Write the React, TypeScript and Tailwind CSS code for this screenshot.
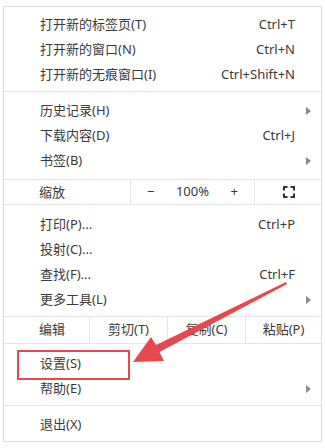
import React from "react";

const FONT = {
  fontFamily: '"Noto Sans", "Noto Sans CJK SC", sans-serif',
};

type Item = { label: string; shortcut?: string; submenu?: boolean };

function MenuRow({ label, shortcut, submenu }: Item) {
  return (
    <div className="flex items-center h-[25px] pl-[36px] pr-[26px] relative">
      <span className="flex-1">{label}</span>
      {shortcut && <span>{shortcut}</span>}
      {submenu && (
        <span className="absolute right-[10px] top-[9px] w-0 h-0 border-y-[4px] border-y-transparent border-l-[5px] border-l-[#8a8a8a]" />
      )}
    </div>
  );
}

function FullscreenIcon() {
  return (
    <svg width="12" height="12" viewBox="0 0 12 12" fill="none" stroke="#333" strokeWidth="2">
      <path d="M1 4.5V1h3.5M7.5 1H11v3.5M11 7.5V11H7.5M4.5 11H1V7.5" />
    </svg>
  );
}

export default function App() {
  return (
    <div className="w-[325px] h-[448px] bg-white relative text-[13px] text-[#3a3a3a]" style={FONT}>
      <div className="absolute left-[3px] top-[6px] w-[319px] h-[436px] border border-[#dcdcdc]">
        {/* new tabs / windows */}
        <div className="pt-[5px] pb-[4px] border-b border-[#e5e5e5]">
          <MenuRow label="打开新的标签页(T)" shortcut="Ctrl+T" />
          <MenuRow label="打开新的窗口(N)" shortcut="Ctrl+N" />
          <MenuRow label="打开新的无痕窗口(I)" shortcut="Ctrl+Shift+N" />
        </div>

        {/* history, downloads, bookmarks */}
        <div className="pt-[6px] pb-[6px] border-b border-[#e5e5e5]">
          <MenuRow label="历史记录(H)" submenu />
          <MenuRow label="下载内容(D)" shortcut="Ctrl+J" />
          <MenuRow label="书签(B)" submenu />
        </div>

        {/* zoom */}
        <div className="flex h-[25px] border-b border-[#e5e5e5]">
          <div className="w-[127px] pl-[35px] pt-[2px] flex items-center border-r border-[#e5e5e5]">缩放</div>
          <div className="w-[124px] flex items-center justify-between px-[16px] border-r border-[#e5e5e5]">
            <span>−</span>
            <span>100%</span>
            <span>+</span>
          </div>
          <div className="flex-1 flex items-center justify-center pl-[2px]">
            <FullscreenIcon />
          </div>
        </div>

        {/* print, cast, find, tools */}
        <div className="pt-[7px] pb-[4px] border-b border-[#e5e5e5]">
          <MenuRow label="打印(P)..." shortcut="Ctrl+P" />
          <MenuRow label="投射(C)..." />
          <MenuRow label="查找(F)..." shortcut="Ctrl+F" />
          <MenuRow label="更多工具(L)" submenu />
        </div>

        {/* edit */}
        <div className="flex h-[27px] border-b border-[#e5e5e5]">
          <div className="w-[86px] pl-[35px] flex items-center border-r border-[#e5e5e5]">编辑</div>
          <div className="w-[78px] flex items-center justify-center border-r border-[#e5e5e5]">剪切(T)</div>
          <div className="w-[78px] flex items-center justify-center border-r border-[#e5e5e5]">复制(C)</div>
          <div className="flex-1 flex items-center justify-center">粘贴(P)</div>
        </div>

        {/* settings, help */}
        <div className="pt-[7px] pb-[4px] border-b border-[#e5e5e5]">
          <MenuRow label="设置(S)" />
          <MenuRow label="帮助(E)" submenu />
        </div>

        <div className="pt-[6px]">
          <MenuRow label="退出(X)" />
        </div>
      </div>

      {/* annotation: red box + arrow */}
      <div className="absolute left-[17px] top-[350px] w-[113px] h-[30px] border-[2px] border-[#e8474d]" />
      <svg className="absolute left-0 top-0" width="325" height="448" viewBox="0 0 325 448">
        <polygon
          points="133,362 151,337 156,345 286,282 287,284 159.5,352 164,361"
          fill="#e8474d"
        />
      </svg>
    </div>
  );
}
